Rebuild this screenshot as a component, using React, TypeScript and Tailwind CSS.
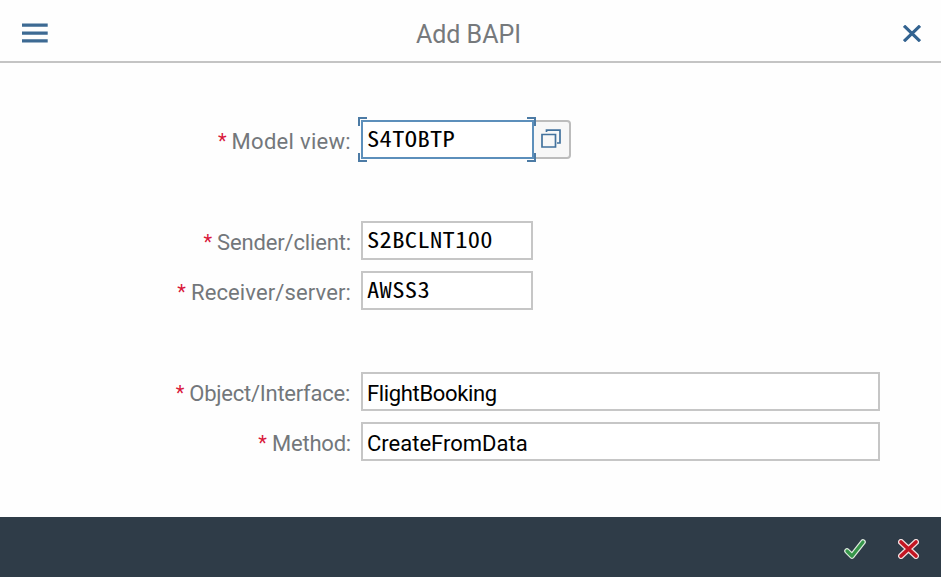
import type { ReactNode } from 'react';

const sans = "font-['Roboto','Liberation_Sans',sans-serif]";
const mono =
  "font-['Noto_Sans_CJK_SC','DejaVu_Sans_Mono',monospace] [font-feature-settings:'hwid'] text-[21.5px] tracking-[0.3px] font-normal origin-left scale-x-[1.14] -mt-[3px] -ml-px";
const plain = 'text-[22px] mt-[3px] -ml-px';

function Label({ text, tracking }: { text: string; tracking: string }) {
  return (
    <label className="flex w-[351px] shrink-0 items-center justify-end pt-px text-[22px] text-[#73777b]">
      <span className="mr-[5px] text-[20px] text-[#d9183b]">*</span>
      <span className={`whitespace-nowrap pt-px ${tracking}`}>{text}</span>
    </label>
  );
}

function Row({ label, tracking, className = '', children }: { label: string; tracking: string; className?: string; children: ReactNode }) {
  return (
    <div className={`flex h-[40px] items-stretch ${className}`}>
      <Label text={label} tracking={tracking} />
      <div className="ml-[10px] flex">{children}</div>
    </div>
  );
}

function Field({ value, className, textClass }: { value: string; className: string; textClass: string }) {
  return (
    <div className={`flex h-[39px] items-center whitespace-nowrap border-2 bg-white pl-[5px] text-black ${className}`}>
      <span className={textClass}>{value}</span>
    </div>
  );
}

export default function App() {
  return (
    <div className={`flex h-[577px] w-[941px] flex-col overflow-hidden bg-[#fefefe] ${sans}`}>
      <header className="flex h-[63px] shrink-0 items-center justify-between border-b-2 border-[#c4c4c4] pl-[22px] pr-[20px] pt-[5px]">
        <svg width="26" height="20" viewBox="0 0 26 20" fill="#3d6a93">
          <path d="M0 .5h25.7v3.3H0zM0 8.4h25.7v3.3H0zM0 16.3h25.7v3.3H0z" />
        </svg>
        <h1 className="-ml-[14px] pt-[3px] text-[25px] leading-[30px] text-[#76797c]">Add BAPI</h1>
        <svg width="18" height="17" viewBox="0 0 18 17" fill="none" stroke="#336390" strokeWidth="3.2">
          <path d="M1 .8 17 16.2M17 .8 1 16.2" />
        </svg>
      </header>

      <main className="flex-1 pt-[57px]">
        <Row label="Model view:" tracking="tracking-[0.3px]">
          <div className="relative">
            <Field value="S4TOBTP" className="w-[173px] border-[#5c8fbb]" textClass={mono} />
            <svg className="absolute -left-[3px] -top-[4px]" width="180" height="47" viewBox="0 0 180 47" fill="none" stroke="#4c7ba5" strokeWidth="2">
              <path d="M1 10V2H9M169 2h8v8M1 37v8h8M169 45h8v-8" />
            </svg>
          </div>
          <button className="flex h-[39px] w-[37px] items-center justify-center rounded-r-[4px] border-2 border-l-0 border-[#bcbcbc] bg-[#f7f7f7] pr-[2px] pb-[2px]">
            <svg width="20" height="19" viewBox="0 0 20 19" fill="none" stroke="#42729d" strokeWidth="1.7">
              <path d="M1 5.5h13.5v12.5H1zM5.5 3V1.2H19V14h-3" />
            </svg>
          </button>
        </Row>
        <Row label="Sender/client:" tracking="tracking-[-0.15px]" className="mt-[61px]">
          <Field value="S2BCLNT100" className="w-[172px] border-[#c6c6c6]" textClass={mono} />
        </Row>
        <Row label="Receiver/server:" tracking="tracking-[0.12px]" className="mt-[10px]">
          <Field value="AWSS3" className="w-[172px] border-[#c6c6c6]" textClass={mono} />
        </Row>
        <Row label="Object/Interface:" tracking="tracking-[-0.25px] pr-px" className="mt-[61px]">
          <Field value="FlightBooking" className="w-[519px] border-[#c6c6c6]" textClass={`${plain} tracking-[-0.35px]`} />
        </Row>
        <Row label="Method:" tracking="tracking-[-0.2px]" className="mt-[10px]">
          <Field value="CreateFromData" className="w-[519px] border-[#c6c6c6]" textClass={plain} />
        </Row>
      </main>

      <footer className="flex h-[60px] shrink-0 items-center justify-end gap-[32px] bg-[#2f3c48] pr-[22px] pt-[3px]">
        <svg width="22" height="20" viewBox="0 0 22 20" fill="none" strokeLinecap="round" strokeLinejoin="round">
          <path d="M3 12 8 17 19 3" stroke="#dfeadf" strokeWidth="5.6" />
          <path d="M3 12 8 17 19 3" stroke="#36964a" strokeWidth="3.2" />
        </svg>
        <svg width="21" height="20" viewBox="0 0 21 20" fill="none" strokeLinecap="round">
          <path d="M3 3 18 17M18 3 3 17" stroke="#f3dede" strokeWidth="6" />
          <path d="M3 3 18 17M18 3 3 17" stroke="#c31522" strokeWidth="3.6" />
        </svg>
      </footer>
    </div>
  );
}
